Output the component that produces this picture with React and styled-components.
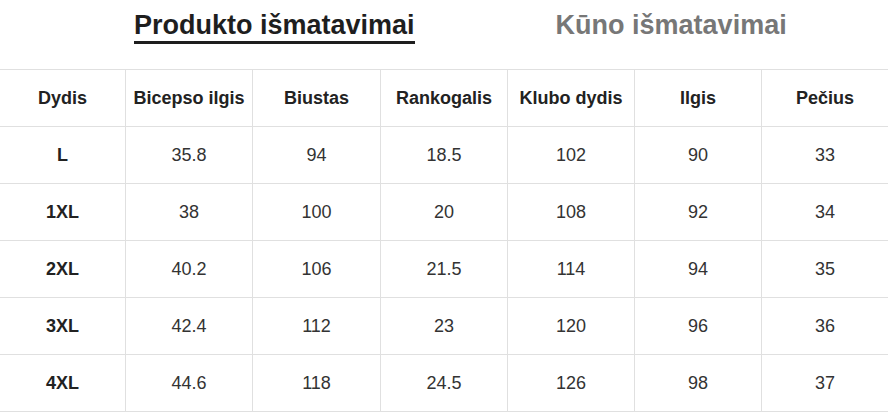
import React from 'react';
import styled, { createGlobalStyle } from 'styled-components';

const columns = [
    { label: 'Dydis', width: 125 },
    { label: 'Bicepso ilgis', width: 127 },
    { label: 'Biustas', width: 128 },
    { label: 'Rankogalis', width: 127 },
    { label: 'Klubo dydis', width: 127 },
    { label: 'Ilgis', width: 127 },
    { label: 'Pečius', width: 127 },
];

const rows = [
    ['L', '35.8', '94', '18.5', '102', '90', '33'],
    ['1XL', '38', '100', '20', '108', '92', '34'],
    ['2XL', '40.2', '106', '21.5', '114', '94', '35'],
    ['3XL', '42.4', '112', '23', '120', '96', '36'],
    ['4XL', '44.6', '118', '24.5', '126', '98', '37'],
];

const template = columns.map(c => `${c.width}px`).join(' ');

const App = () => {
    return (
        <>
            <GlobalStyle />
            <Page>
                <Tabs>
                    <Tab active>Produkto išmatavimai</Tab>
                    <Tab>Kūno išmatavimai</Tab>
                </Tabs>
                <Table>
                    <Row $template={template}>
                        {columns.map((col, i) => (
                            <Cell key={col.label} $first={i === 0} $head>{col.label}</Cell>
                        ))}
                    </Row>
                    {rows.map(row => (
                        <Row key={row[0]} $template={template}>
                            {row.map((value, i) => (
                                <Cell key={i} $first={i === 0} $head={i === 0}>{value}</Cell>
                            ))}
                        </Row>
                    ))}
                </Table>
            </Page>
        </>
    );
};

export default App;

// Styled-components
const GlobalStyle = createGlobalStyle`
    body {
        margin: 0;
        background: #fff;
        font-family: 'Liberation Sans', Arial, sans-serif;
    }
`;

const Page = styled.div`
    width: 888px;
    height: 412px;
    overflow: hidden;
    background: #fff;
`;

const Tabs = styled.div`
    height: 69px;
    display: flex;
    align-items: flex-start;
    gap: 141px;
    padding-left: 134px;
    box-sizing: border-box;
`;

const Tab = styled.div`
    margin-top: 10px;
    padding-bottom: 1px;
    font-size: 27px;
    font-weight: bold;
    line-height: 30px;
    white-space: nowrap;
    color: ${props => (props.active ? '#1e1e1e' : '#777')};
    border-bottom: 3px solid ${props => (props.active ? '#1e1e1e' : 'transparent')};
`;

const Table = styled.div`
    display: flex;
    flex-direction: column;
`;

const Row = styled.div`
    display: grid;
    grid-template-columns: ${props => props.$template};
    height: 57px;
    border-top: 1px solid #e0e0e0;
    box-sizing: border-box;
    &:last-child {
        height: 58px;
        border-bottom: 1px solid #e0e0e0;
    }
`;

const Cell = styled.div`
    display: flex;
    align-items: center;
    justify-content: center;
    padding-top: 1px;
    border-left: ${props => (props.$first ? 'none' : '1px solid #e0e0e0')};
    font-size: 18px;
    font-weight: ${props => (props.$head ? 'bold' : 'normal')};
    color: ${props => (props.$head ? '#222' : '#333')};
`;
